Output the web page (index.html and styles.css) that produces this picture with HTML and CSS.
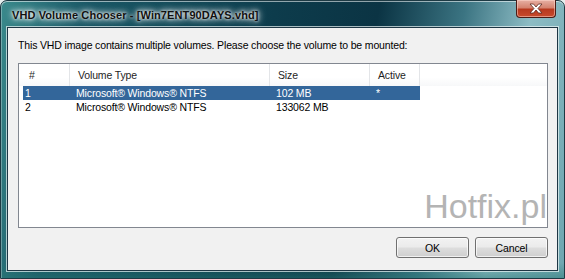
FILE: index.html
```html
<!DOCTYPE html>
<html>
<head>
  <title>VHD Volume Chooser</title>
  <link rel="stylesheet" href="styles.css">
</head>
<body>
  <div class="window">
    <div class="titlebar">
      <span class="title">VHD Volume Chooser - [Win7ENT90DAYS.vhd]</span>
      <button class="close" aria-label="Close">
        <svg width="16" height="11" viewBox="0 0 16 11">
          <path d="M2 1 L5.5 1 L8 4 L10.5 1 L14 1 L10 5.5 L14 10 L10.5 10 L8 7 L5.5 10 L2 10 L6 5.5 Z" fill="#fff" stroke="#5a2a22" stroke-width="0.8" stroke-linejoin="round"/>
        </svg>
      </button>
    </div>
    <div class="client">
      <p class="prompt">This VHD image contains multiple volumes. Please choose the volume to be mounted:</p>
      <div class="listbox">
        <div class="row head">
          <span class="col c-num">#</span>
          <span class="col c-type">Volume Type</span>
          <span class="col c-size">Size</span>
          <span class="col c-active">Active</span>
        </div>
        <div class="row selected">
          <span class="col c-num">1</span>
          <span class="col c-type">Microsoft® Windows® NTFS</span>
          <span class="col c-size">102 MB</span>
          <span class="col c-active">*</span>
        </div>
        <div class="row">
          <span class="col c-num">2</span>
          <span class="col c-type">Microsoft® Windows® NTFS</span>
          <span class="col c-size">133062 MB</span>
          <span class="col c-active"></span>
        </div>
        <div class="watermark">Hotfix.pl</div>
      </div>
      <div class="actions">
        <button class="btn">OK</button>
        <button class="btn">Cancel</button>
      </div>
    </div>
  </div>
</body>
</html>
```

FILE: styles.css
```css
html, body {
  margin: 0;
  padding: 0;
  background: #e6eeee;
}
body {
  font-family: "Liberation Sans", Arial, sans-serif;
  font-size: 10.5px;
  letter-spacing: -0.15px;
  color: #000;
}
.window {
  width: 565px;
  height: 279px;
  box-sizing: border-box;
  display: flex;
  flex-direction: column;
  border-radius: 7px 7px 0 0;
  border: 1px solid #1d3a44;
  background:
    linear-gradient(to bottom, rgba(0,0,0,0) 262px, rgba(40,120,115,0.55) 279px),
    linear-gradient(100deg, #3a8a8c 0%, #1a5866 14%, #0d3c4c 45%, #0b3444 62%, #3b7482 76%, #8dbcc4 87%, #6ea6b0 100%);
  box-shadow: inset 0 1px 0 rgba(255,255,255,0.55), inset 1px 0 0 rgba(255,255,255,0.3);
}
.titlebar {
  height: 26px;
  display: flex;
  justify-content: space-between;
  align-items: flex-start;
  padding: 0 8px 0 11px;
}
.title {
  font-family: "Liberation Sans", Arial, sans-serif;
  font-size: 11px;
  font-weight: bold;
  letter-spacing: 0.1px;
  line-height: 15px;
  padding-top: 7px;
  color: #111;
  text-shadow: 0 0 3px #fff, 0 0 6px #fff, 0 0 9px rgba(255,255,255,0.8);
}
.close {
  width: 40px;
  height: 18px;
  margin-top: -1px;
  padding: 0;
  display: flex;
  align-items: center;
  justify-content: center;
  border: 1px solid #4b1c16;
  border-top: none;
  border-radius: 0 0 4px 4px;
  background: linear-gradient(to bottom, #e7b0a4 0%, #d48370 45%, #b7391f 55%, #c84a2c 100%);
  box-shadow: inset 0 0 0 1px rgba(255,220,210,0.5);
}
.client {
  flex: 1;
  margin: 0 6px 7px 6px;
  background: #f1f1f1;
  border: 1px solid #1e3644;
  box-shadow: 0 0 0 1px rgba(235,245,245,0.7);
  padding: 0 9px 0 10px;
}
.prompt {
  margin: 11px 0 11px 0;
  line-height: 13px;
}
.listbox {
  position: relative;
  height: 165px;
  box-sizing: border-box;
  border: 1px solid #828790;
  background: #fff;
  padding-left: 4px;
}
.row {
  display: flex;
  height: 14px;
  line-height: 14px;
  white-space: nowrap;
}
.col {
  box-sizing: border-box;
  padding-left: 6px;
}
.c-num { width: 47px; padding-left: 2px; }
.c-type { width: 200px; }
.c-size { width: 100px; }
.c-active { width: 50px; }
.row.head {
  height: 22px;
  line-height: 22px;
  color: #1e1e1e;
  margin-left: -4px;
  padding-left: 4px;
  background: linear-gradient(to bottom, #ffffff 0%, #ffffff 60%, #f7f8f9 100%);
}
.row.head .col {
  padding-left: 8px;
  border-right: 1px solid #e3e5e8;
}
.row.head .c-num { padding-left: 6px; }
.row.selected {
  background: #33669a;
  color: #fff;
  width: 397px;
}
.watermark {
  position: absolute;
  right: 0;
  bottom: 4px;
  font-size: 34px;
  line-height: 34px;
  letter-spacing: 0;
  color: #b4b4b4;
}
.actions {
  display: flex;
  justify-content: flex-end;
  gap: 6px;
  margin-top: 9px;
}
.btn {
  width: 73px;
  height: 21px;
  padding: 0;
  font-family: "Liberation Sans", Arial, sans-serif;
  font-size: 10.5px;
  letter-spacing: -0.15px;
  color: #000;
  border: 1px solid #707070;
  border-radius: 3px;
  background: linear-gradient(to bottom, #f2f2f2 0%, #ebebeb 48%, #dddddd 52%, #cfcfcf 100%);
  box-shadow: inset 0 0 0 1px rgba(255,255,255,0.7);
}
```
